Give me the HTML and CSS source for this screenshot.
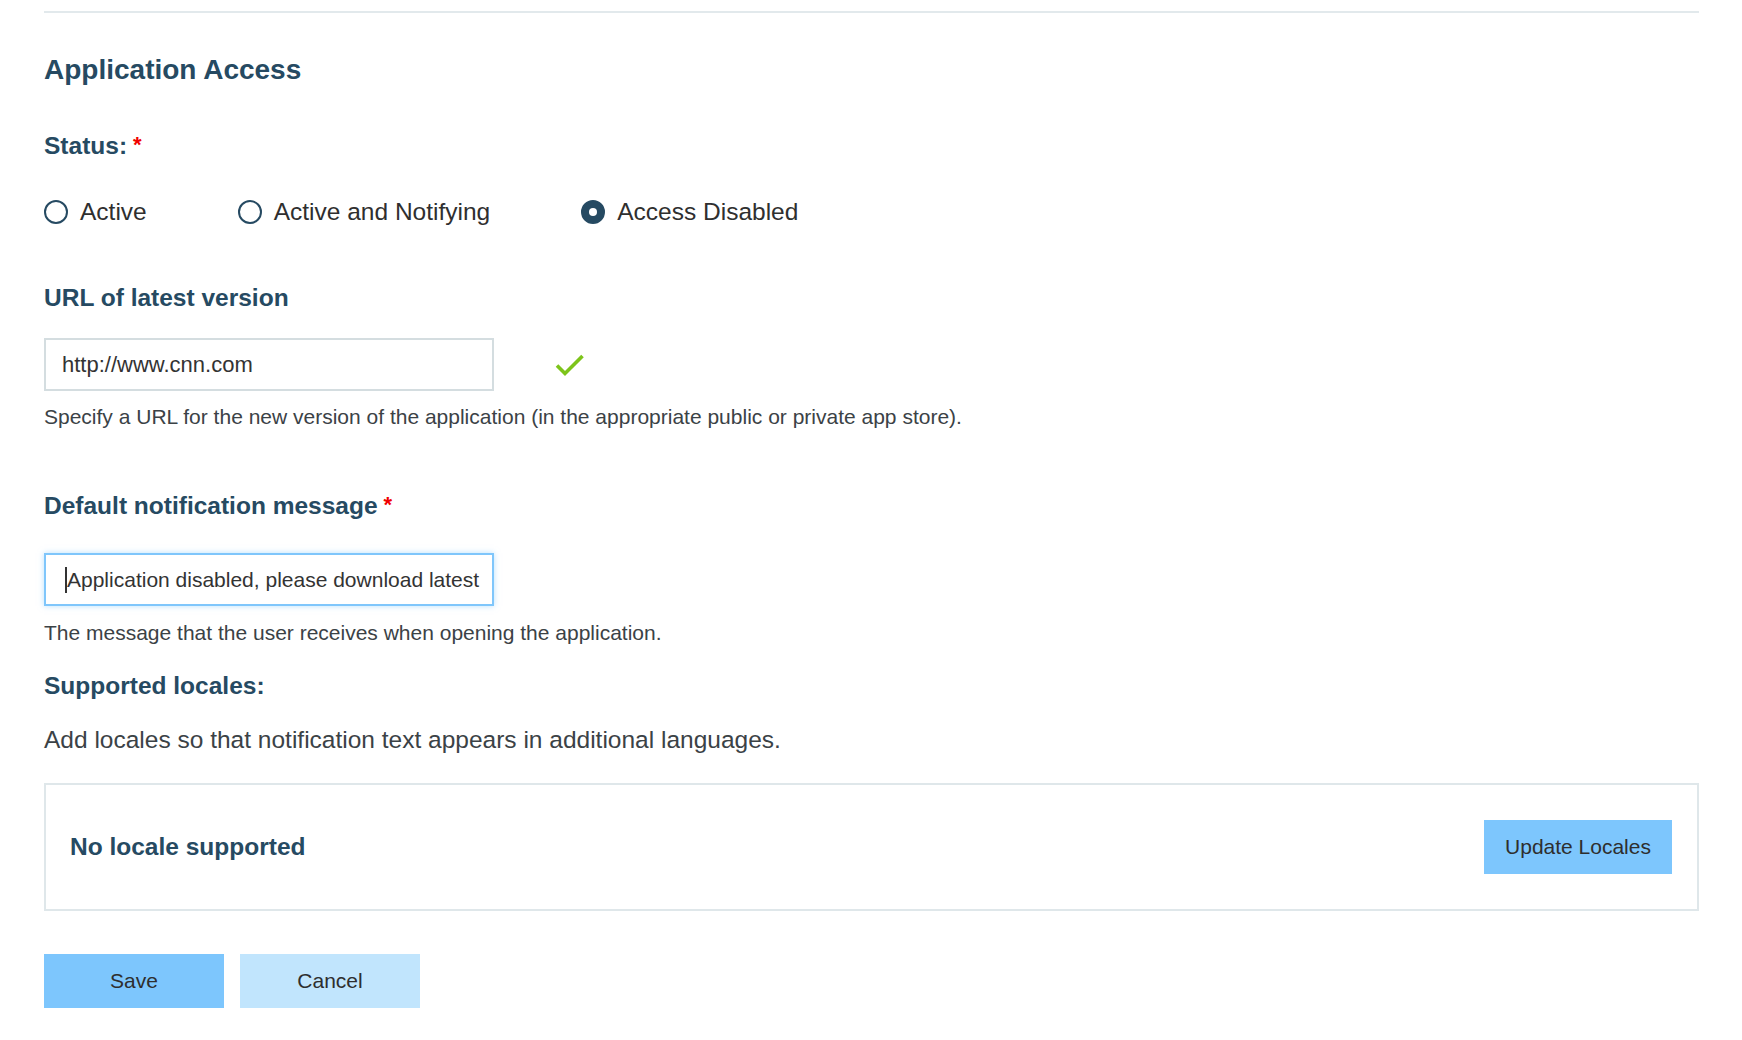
FILE: index.html
```html
<!DOCTYPE html>
<html lang="en">
<head>
<meta charset="utf-8">
<title>Application Access</title>
<link rel="stylesheet" href="styles.css">
</head>
<body>
<div class="page">
  <div class="rule"></div>
  <h1 class="title">Application Access</h1>

  <div class="label">Status:<span class="req">*</span></div>
  <div class="radios">
    <label class="radio"><span class="dot"></span><span class="radio-text">Active</span></label>
    <label class="radio"><span class="dot"></span><span class="radio-text">Active and Notifying</span></label>
    <label class="radio"><span class="dot checked"></span><span class="radio-text">Access Disabled</span></label>
  </div>

  <div class="label label-url">URL of latest version</div>
  <div class="input-row">
    <div class="input input-url">http://www.cnn.com</div>
    <svg class="check" width="30" height="24" viewBox="0 0 30 24"><path d="M2 12.5 L10 20.5 L27.5 3" fill="none" stroke="#7dc41a" stroke-width="3.6" stroke-linecap="butt" stroke-linejoin="miter"/></svg>
  </div>
  <p class="help help-url">Specify a URL for the new version of the application (in the appropriate public or private app store).</p>

  <div class="label label-msg">Default notification message<span class="req">*</span></div>
  <div class="input input-focus"><span class="caret"></span>Application disabled, please download latest</div>
  <p class="help help-msg">The message that the user receives when opening the application.</p>

  <div class="label label-loc">Supported locales:</div>
  <p class="intro">Add locales so that notification text appears in additional languages.</p>

  <div class="locale-box">
    <div class="locale-empty">No locale supported</div>
    <button class="btn btn-primary btn-update">Update Locales</button>
  </div>

  <div class="actions">
    <button class="btn btn-primary btn-wide">Save</button>
    <button class="btn btn-secondary btn-wide">Cancel</button>
  </div>
</div>
</body>
</html>
```

FILE: styles.css
```css
* { box-sizing: border-box; }

html, body {
  margin: 0;
  background: #ffffff;
}

body {
  font-family: "Liberation Sans", Arial, Helvetica, sans-serif;
  color: #333333;
}

.page {
  width: 1742px;
  padding: 11px 43px 0 44px;
}

.rule {
  height: 2px;
  background: #e2e9ec;
}

.title {
  margin: 41px 0 0;
  font-size: 28px;
  line-height: 32px;
  font-weight: bold;
  color: #264a62;
}

.label {
  margin-top: 45px;
  font-size: 24.5px;
  line-height: 28px;
  font-weight: bold;
  color: #264a62;
}

.req {
  color: #f00000;
  margin-left: 6px;
  font-size: 22px;
  vertical-align: 2px;
}

.radios {
  display: flex;
  align-items: center;
  gap: 91px;
  margin-top: 38px;
  height: 28px;
}

.radio {
  display: flex;
  align-items: center;
  gap: 12px;
}

.dot {
  width: 24px;
  height: 24px;
  border: 2px solid #264a62;
  border-radius: 50%;
  display: flex;
  align-items: center;
  justify-content: center;
}

.dot.checked {
  background: #264a62;
}

.dot.checked::after {
  content: "";
  width: 8px;
  height: 8px;
  border-radius: 50%;
  background: #ffffff;
}

.radio-text {
  font-size: 24.5px;
  line-height: 28px;
  color: #2f2f2f;
}

.label-url { margin-top: 58px; }

.input-row {
  display: flex;
  align-items: center;
  gap: 61px;
  margin-top: 26px;
}

.input {
  width: 450px;
  height: 53px;
  border: 2px solid #d4dde0;
  padding: 0 16px;
  display: flex;
  align-items: center;
  font-size: 21px;
  color: #333333;
  white-space: nowrap;
  overflow: hidden;
  background: #ffffff;
}

.input-url {
  font-size: 22px;
}

.check {
  display: block;
}

.help {
  margin: 12px 0 0;
  font-size: 21px;
  line-height: 24px;
  color: #3b4246;
}

.help-url { margin-top: 14px; }

.label-msg { margin-top: 62px; }

.input-focus {
  margin-top: 33px;
  border-color: #7fc6fb;
  box-shadow: 0 0 6px rgba(127, 198, 251, 0.55);
  padding-left: 19px;
  padding-right: 16px;
}

.caret {
  display: inline-block;
  width: 2px;
  height: 26px;
  background: #333333;
  flex: none;
}

.help-msg { margin-top: 15px; }

.label-loc { margin-top: 27px; }

.intro {
  margin: 26px 0 0;
  font-size: 24.5px;
  line-height: 28px;
  color: #3b4246;
}

.locale-box {
  margin-top: 29px;
  height: 128px;
  border: 2px solid #dfe7ea;
  padding: 0 25px 0 24px;
  display: flex;
  align-items: center;
  justify-content: space-between;
}

.locale-empty {
  font-size: 24.5px;
  font-weight: bold;
  color: #264a62;
}

.btn {
  font-family: "Liberation Sans", Arial, Helvetica, sans-serif;
  font-size: 21px;
  color: #2e2e2e;
  border: 0;
  height: 54px;
  padding: 0;
  cursor: pointer;
}

.btn-primary { background: #7dc6fd; }
.btn-secondary { background: #c1e5fd; }

.btn-update { width: 188px; }

.btn-wide { width: 180px; }

.actions {
  display: flex;
  gap: 16px;
  margin-top: 43px;
}
```
